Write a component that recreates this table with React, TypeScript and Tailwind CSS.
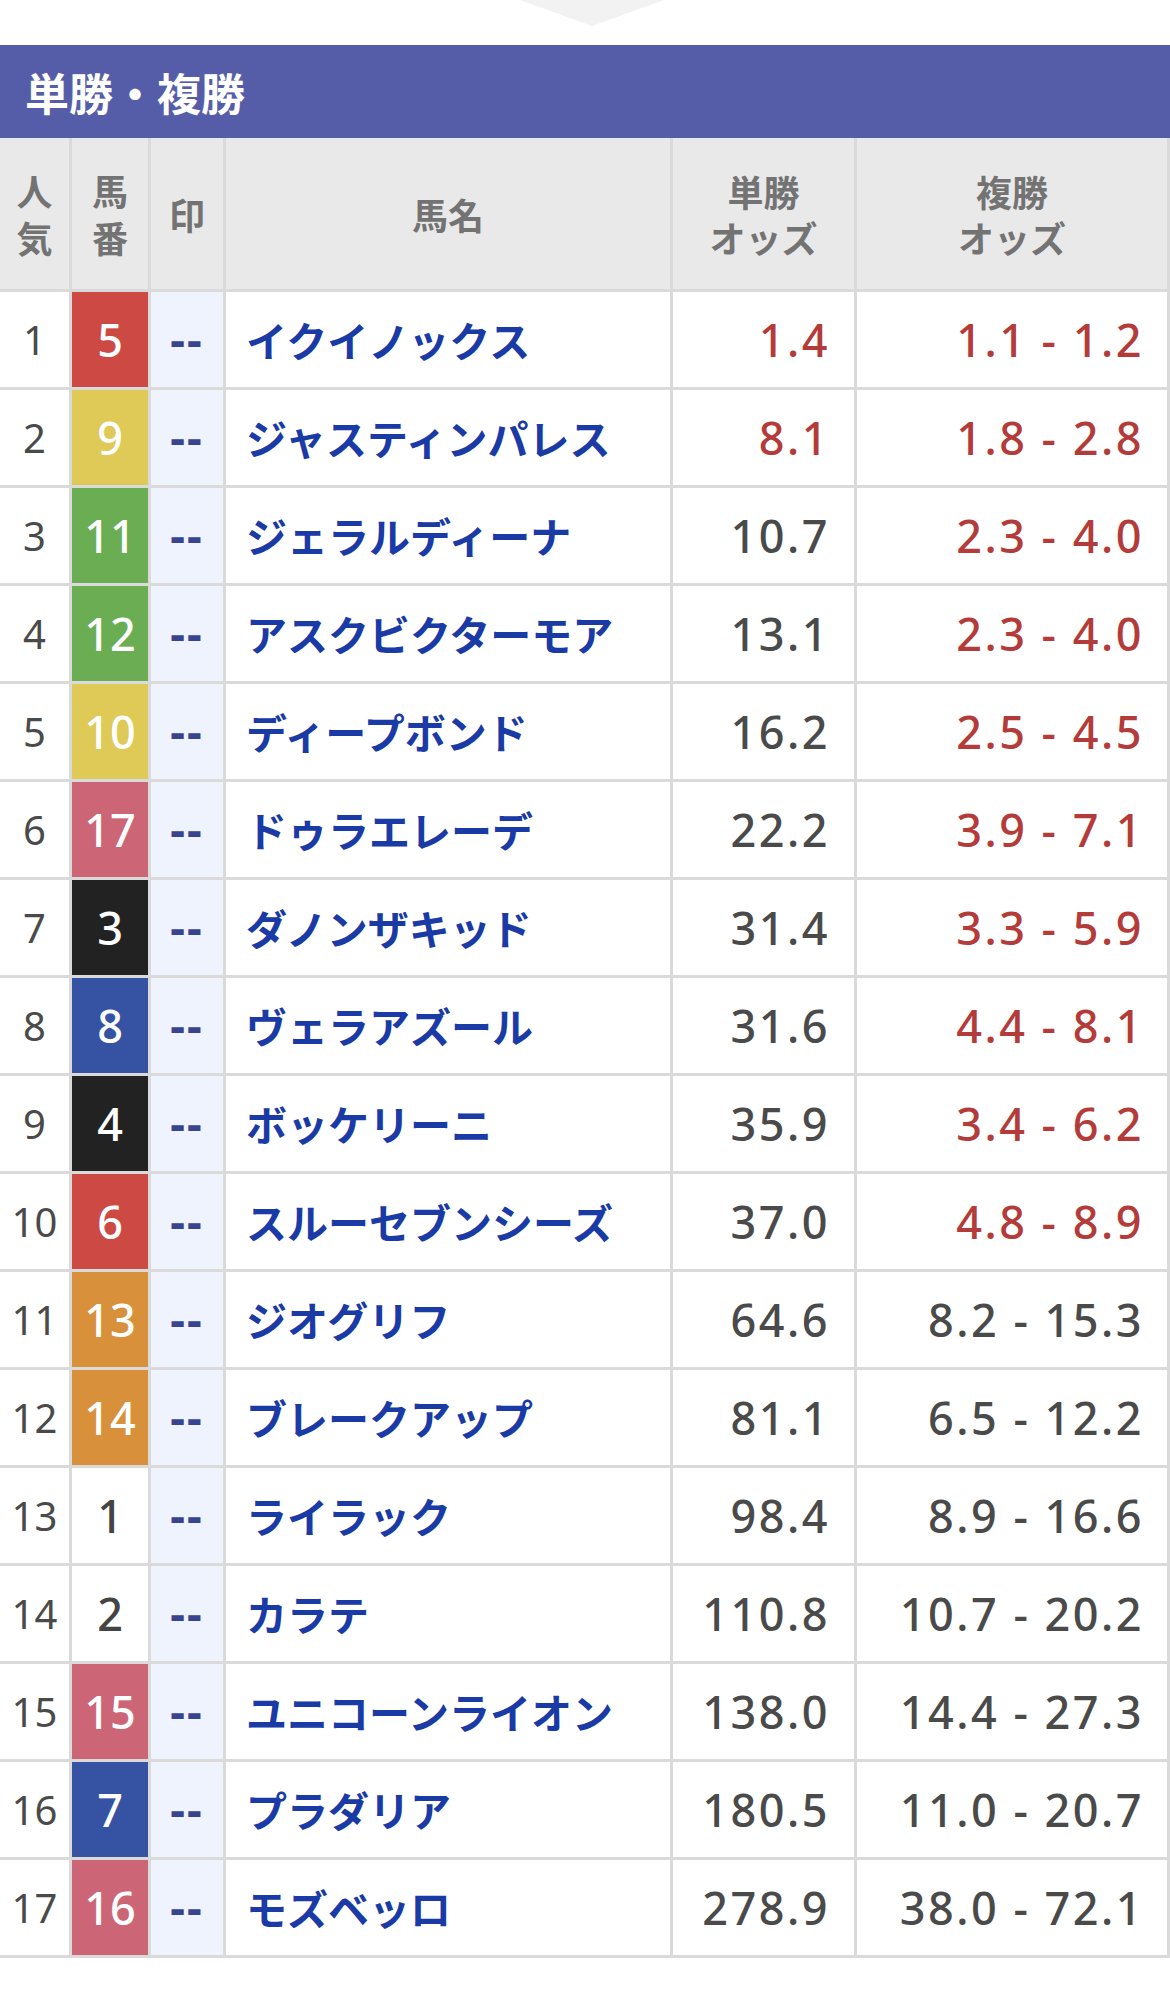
const rows: [number, number, string, string, string, boolean, boolean][] = [
  [1, 5, "イクイノックス", "1.4", "1.1 - 1.2", true, true],
  [2, 9, "ジャスティンパレス", "8.1", "1.8 - 2.8", true, true],
  [3, 11, "ジェラルディーナ", "10.7", "2.3 - 4.0", false, true],
  [4, 12, "アスクビクターモア", "13.1", "2.3 - 4.0", false, true],
  [5, 10, "ディープボンド", "16.2", "2.5 - 4.5", false, true],
  [6, 17, "ドゥラエレーデ", "22.2", "3.9 - 7.1", false, true],
  [7, 3, "ダノンザキッド", "31.4", "3.3 - 5.9", false, true],
  [8, 8, "ヴェラアズール", "31.6", "4.4 - 8.1", false, true],
  [9, 4, "ボッケリーニ", "35.9", "3.4 - 6.2", false, true],
  [10, 6, "スルーセブンシーズ", "37.0", "4.8 - 8.9", false, true],
  [11, 13, "ジオグリフ", "64.6", "8.2 - 15.3", false, false],
  [12, 14, "ブレークアップ", "81.1", "6.5 - 12.2", false, false],
  [13, 1, "ライラック", "98.4", "8.9 - 16.6", false, false],
  [14, 2, "カラテ", "110.8", "10.7 - 20.2", false, false],
  [15, 15, "ユニコーンライオン", "138.0", "14.4 - 27.3", false, false],
  [16, 7, "プラダリア", "180.5", "11.0 - 20.7", false, false],
  [17, 16, "モズベッロ", "278.9", "38.0 - 72.1", false, false],
];

// 17頭立て: 8枠は 15-17
const frameColor = (n: number) => {
  if (n <= 2) return "bg-white text-[#444]";
  if (n <= 4) return "bg-[#222222] text-white";
  if (n <= 6) return "bg-[#cc4a43] text-white";
  if (n <= 8) return "bg-[#3552a3] text-white";
  if (n <= 10) return "bg-[#dfc957] text-white";
  if (n <= 12) return "bg-[#6aad53] text-white";
  if (n <= 14) return "bg-[#d8913a] text-white";
  return "bg-[#cc6677] text-white";
};

const latin = "font-['Noto_Sans','Noto_Sans_CJK_JP',sans-serif]";
const jp = "font-['Noto_Sans_CJK_JP',sans-serif]";
const head = `bg-[#e9e9e9] flex flex-col items-center justify-center text-center text-[36px] font-bold text-[#737373] ${jp}`;

export default function App() {
  return (
    <div className="w-[1170px] min-h-[1996px] bg-white">
      <div className="h-[45px] pl-[520px]">
        <svg width="144" height="28" viewBox="0 0 144 28">
          <polygon points="0,0 144,0 72,26" fill="#f2f2f2" />
        </svg>
      </div>
      <div className={`h-[93px] bg-[#565da8] flex items-center pl-[25px] text-white text-[44px] font-bold ${jp}`}>
        単勝・複勝
      </div>
      <div className="grid grid-cols-[69px_76px_72px_444px_181px_310px] gap-[3px] bg-[#dadada] pr-[3px] pb-[3px]">
        {/* header */}
        <div className={`h-[151px] leading-[47px] ${head}`}>
          <span>人</span>
          <span>気</span>
        </div>
        <div className={`leading-[47px] ${head}`}>
          <span>馬</span>
          <span>番</span>
        </div>
        <div className={head}>印</div>
        <div className={head}>馬名</div>
        <div className={`leading-[46px] ${head}`}>
          <span>単勝</span>
          <span>オッズ</span>
        </div>
        <div className={`leading-[46px] ${head}`}>
          <span>複勝</span>
          <span>オッズ</span>
        </div>

        {rows.map(([pop, num, name, win, place, winRed, placeRed]) => (
          <Row key={pop} pop={pop} num={num} name={name} win={win} place={place} winRed={winRed} placeRed={placeRed} />
        ))}
      </div>
    </div>
  );
}

function Row(props: { pop: number; num: number; name: string; win: string; place: string; winRed: boolean; placeRed: boolean }) {
  const { pop, num, name, win, place, winRed, placeRed } = props;
  return (
    <>
      <div className={`h-[95px] bg-white flex items-center justify-center text-[40px] text-[#4a4a4a] ${latin}`}>{pop}</div>
      <div className={`flex items-center justify-center text-[45px] font-medium ${latin} ${frameColor(num)}`}>{num}</div>
      <div className={`bg-[#eff3fd] flex items-center justify-center text-[46px] font-bold text-[#39448f] tracking-[2px] ${latin}`}>--</div>
      <div className={`bg-white flex items-center pl-[20px] text-[41px] font-bold text-[#1a3aa5] ${jp}`}>{name}</div>
      <div className={`bg-white flex items-center justify-end pr-[24px] text-[45px] font-medium tracking-[2.5px] ${latin} ${winRed ? "text-[#b33c3a]" : "text-[#4a4a4a]"}`}>{win}</div>
      <div className={`bg-white flex items-center justify-end pr-[23px] text-[45px] font-medium tracking-[2.5px] whitespace-pre ${latin} ${placeRed ? "text-[#b33c3a]" : "text-[#4a4a4a]"}`}>{place}</div>
    </>
  );
}
